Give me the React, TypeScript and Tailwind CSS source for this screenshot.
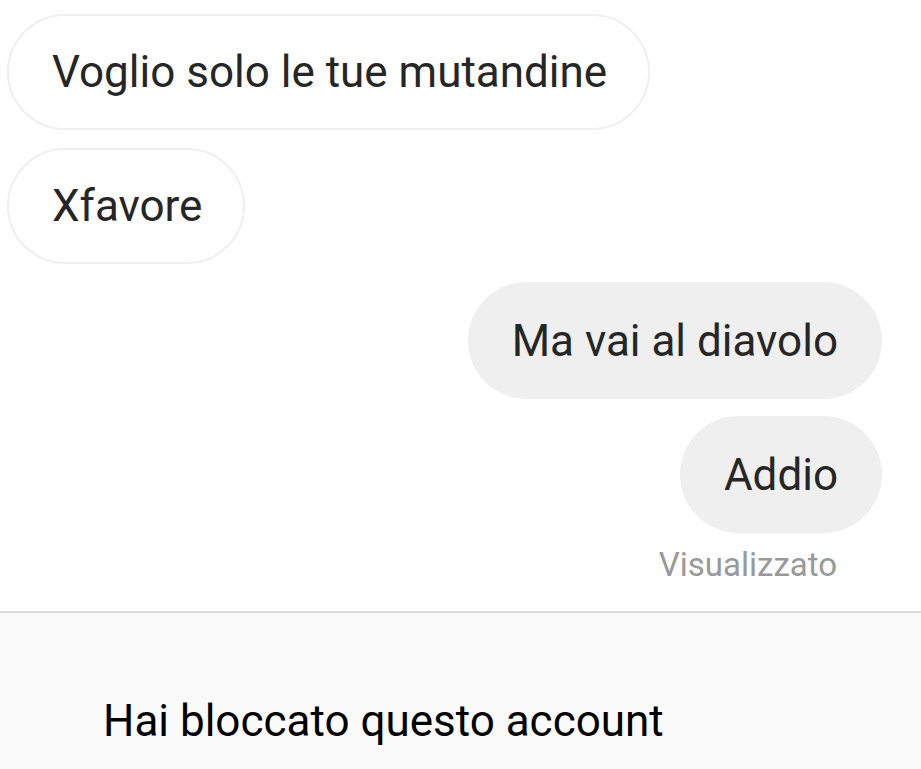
function Bubble({ text, mine }: { text: string; mine?: boolean }) {
  return (
    <div
      className={
        mine
          ? "h-[117px] flex items-center rounded-full bg-[#efefef] px-[44px]"
          : "h-[116px] flex items-center rounded-full bg-white border-2 border-[#efefef] pl-[43px] pr-[41px]"
      }
    >
      <span className="text-[44px] text-[#262626] leading-none">{text}</span>
    </div>
  )
}

export default function App() {
  return (
    <div className="w-[921px] h-[769px] bg-white flex flex-col overflow-hidden" style={{ fontFamily: "Roboto, sans-serif" }}>
      <div className="flex flex-col pt-[14px] pl-[7px] pr-[39px] gap-[18px]">
        <div className="flex">
          <Bubble text="Voglio solo le tue mutandine" />
        </div>
        <div className="flex">
          <Bubble text="Xfavore" />
        </div>
        <div className="flex justify-end">
          <Bubble text="Ma vai al diavolo" mine />
        </div>
        <div className="flex justify-end -mt-[1px]">
          <Bubble text="Addio" mine />
        </div>
      </div>
      <div className="flex justify-end pr-[84px] mt-[15px] h-[63px]">
        <span className="text-[33px] text-[#999999] leading-none">Visualizzato</span>
      </div>
      <div className="flex-1 bg-[#fafafa] border-t-2 border-[#dbdbdb] flex items-end pl-[103px] pb-[26px]">
        <span className="text-[44px] text-black leading-none">Hai bloccato questo account</span>
      </div>
    </div>
  )
}
